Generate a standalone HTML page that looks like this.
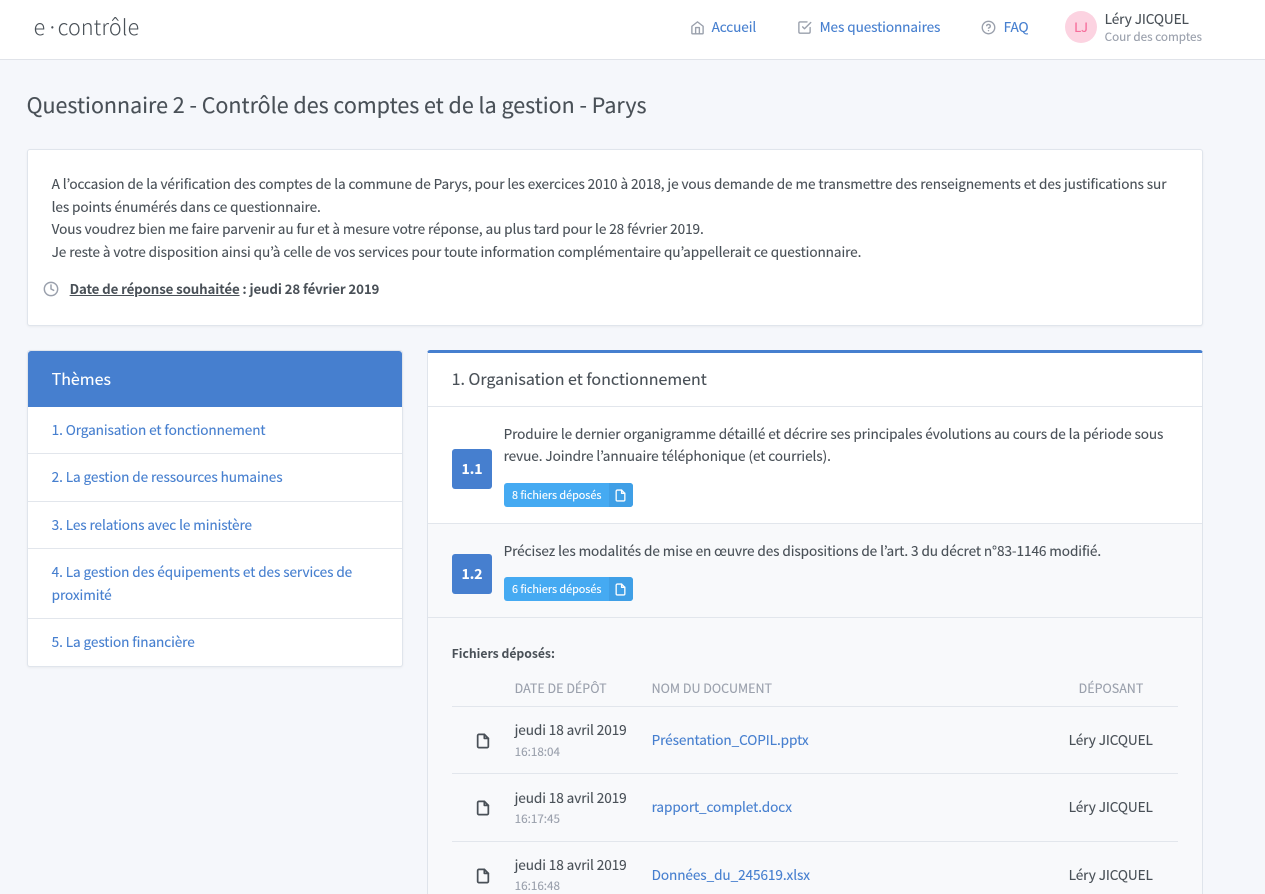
<!DOCTYPE html>
<html lang="fr"><head><meta charset="utf-8"><title>e-contrôle</title>
<style>
html,body{margin:0;padding:0;width:1265px;height:894px;overflow:hidden}
body{position:relative;background:#f5f7fb;color:#495057;font-family:"Noto Sans CJK JP","Liberation Sans",sans-serif;font-size:13.6px;letter-spacing:-.09px;-webkit-text-stroke:.12px}
#w{position:absolute;left:0;top:0;width:1265px;height:894px;overflow:hidden}
.a{position:absolute;white-space:nowrap;line-height:22px;margin-top:-1px;margin-left:-.4px}
.b{position:absolute;box-sizing:border-box}
.l{color:#467fcf}
svg{position:absolute;fill:none;stroke-linecap:round;stroke-linejoin:round}
.card{background:#fff;border:1px solid rgba(0,40,100,.12);border-radius:3px;box-shadow:0 1px 2px rgba(0,0,0,.05)}
.hr{position:absolute;height:1px;background:#e2e6ec}
.num{position:absolute;left:452px;width:40px;height:40px;background:#467fcf;border-radius:3px;color:#fff;font-weight:700;font-size:14px;line-height:40px;text-align:center;letter-spacing:0}
.bad{position:absolute;left:504px;width:129px;height:24px;background:#45aaf2;border-radius:3px;color:#fff;font-size:10.85px;letter-spacing:-.03px;line-height:25px;padding-left:8px;box-sizing:border-box;white-space:nowrap}
.bad i{position:absolute;right:0;top:0;width:24px;height:24px;background:#3f9fe6;border-radius:0 3px 3px 0}
.g{color:#9aa0ac}
.th{font-size:12.5px;letter-spacing:0;margin-top:0}
.t{font-size:11.7px;letter-spacing:0;margin-top:0}
.big{margin-top:0;font-size:16px;letter-spacing:0}
.logo{margin-top:0;font-size:21.5px;font-weight:300;line-height:28px;letter-spacing:.1px;-webkit-text-stroke:0}
</style></head><body><div id="w">
<div class="b" style="left:0;top:0;width:1265px;height:60px;background:#fff;border-bottom:1px solid #e0e3e9"></div>
<div class="a logo" style="left:34px;top:13px">e</div>
<div class="a logo" style="left:47px;top:13px">·</div>
<div class="a logo" style="left:58px;top:13px">contrôle</div>

<svg style="left:690px;top:20px" width="15" height="15" viewBox="0 0 24 24" stroke="#9aa0ac" stroke-width="2.2"><path d="M3 10l9-7 9 7v11a1 1 0 0 1-1 1H4a1 1 0 0 1-1-1z"/><path d="M9 22V12h6v10"/></svg>
<div class="a l" style="left:712px;top:16px">Accueil</div>
<svg style="left:797px;top:20px" width="15" height="15" viewBox="0 0 24 24" stroke="#9aa0ac" stroke-width="2.2"><path d="M9 11l3 3L22 4"/><path d="M21 12v7a2 2 0 0 1-2 2H5a2 2 0 0 1-2-2V5a2 2 0 0 1 2-2h11"/></svg>
<div class="a l" style="left:820px;top:16px">Mes questionnaires</div>
<svg style="left:981px;top:20px" width="15" height="15" viewBox="0 0 24 24" stroke="#9aa0ac" stroke-width="2.2"><circle cx="12" cy="12" r="10"/><path d="M9.1 9a3 3 0 0 1 5.8 1c0 2-3 3-3 3"/><path d="M12 17h.01"/></svg>
<div class="a l" style="left:1004px;top:16px">FAQ</div>
<div class="b" style="left:1065px;top:11px;width:32px;height:32px;border-radius:50%;background:#fcd3e1;color:#f66d9b;text-align:center;line-height:32px;font-size:13px">LJ</div>
<div class="a" style="left:1105px;top:8px">Léry JICQUEL</div>
<div class="a g" style="left:1105px;top:26px;margin-top:0;font-size:11.7px;letter-spacing:0">Cour des comptes</div>

<div class="a" style="left:27px;top:89px;margin-top:0;font-size:21.45px;letter-spacing:0;line-height:32px">Questionnaire 2 - Contrôle des comptes et de la gestion - Parys</div>

<div class="b card" style="left:27px;top:149px;width:1176px;height:177px"></div>
<div class="a" style="left:52px;top:173px">A l’occasion de la vérification des comptes de la commune de Parys, pour les exercices 2010 à 2018, je vous demande de me transmettre des renseignements et des justifications sur</div>
<div class="a" style="left:52px;top:196px">les points énumérés dans ce questionnaire.</div>
<div class="a" style="left:52px;top:218px">Vous voudrez bien me faire parvenir au fur et à mesure votre réponse, au plus tard pour le 28 février 2019.</div>
<div class="a" style="left:52px;top:241px">Je reste à votre disposition ainsi qu’à celle de vos services pour toute information complémentaire qu’appellerait ce questionnaire.</div>
<svg style="left:43px;top:281px" width="16" height="16" viewBox="0 0 24 24" stroke="#9aa0ac" stroke-width="2.2"><circle cx="12" cy="12" r="10"/><path d="M12 6v6l4 2"/></svg>
<div class="a" style="left:70px;top:278px;margin-top:0;font-weight:700;font-size:13.3px;letter-spacing:-.13px;-webkit-text-stroke:0"><u>Date de réponse souhaitée</u> : jeudi 28 février 2019</div>

<div class="b card" style="left:27px;top:350px;width:376px;height:317px"></div>
<div class="b" style="left:28px;top:351px;width:374px;height:56px;background:#467fcf;border-radius:3px 3px 0 0"></div>
<div class="a big" style="left:52px;top:367px;color:#fff">Thèmes</div>
<div class="a l" style="left:52px;top:419px">1. Organisation et fonctionnement</div>
<div class="hr" style="left:28px;top:453px;width:374px"></div>
<div class="a l" style="left:52px;top:466px">2. La gestion de ressources humaines</div>
<div class="hr" style="left:28px;top:501px;width:374px"></div>
<div class="a l" style="left:52px;top:514px">3. Les relations avec le ministère</div>
<div class="hr" style="left:28px;top:548px;width:374px"></div>
<div class="a l" style="left:52px;top:561px">4. La gestion des équipements et des services de</div>
<div class="a l" style="left:52px;top:584px">proximité</div>
<div class="hr" style="left:28px;top:618px;width:374px"></div>
<div class="a l" style="left:52px;top:631px">5. La gestion financière</div>

<div class="b" style="left:427px;top:350px;width:776px;height:560px;background:#fff;border:1px solid rgba(0,40,100,.12);border-top:3px solid #467fcf;border-radius:3px"></div>
<div class="a big" style="left:452px;top:367px">1. Organisation et fonctionnement</div>
<div class="hr" style="left:428px;top:406px;width:774px"></div>
<div class="a" style="left:504px;top:423px">Produire le dernier organigramme détaillé et décrire ses principales évolutions au cours de la période sous</div>
<div class="a" style="left:504px;top:445px">revue. Joindre l’annuaire téléphonique (et courriels).</div>
<div class="num" style="top:449px">1.1</div>
<div class="bad" style="top:483px">8 fichiers déposés<i></i><svg style="left:110px;top:6px" width="13" height="13" viewBox="0 0 24 24" stroke="#fff" stroke-width="2.4"><path d="M14 2H6a2 2 0 0 0-2 2v16a2 2 0 0 0 2 2h12a2 2 0 0 0 2-2V8z"/><path d="M14 2v6h6"/></svg></div>
<div class="b" style="left:428px;top:523px;width:774px;height:390px;background:#f8f9fb;border-top:1px solid #e2e6ec"></div>
<div class="a" style="left:504px;top:540px">Précisez les modalités de mise en œuvre des dispositions de l’art. 3 du décret n°83-1146 modifié.</div>
<div class="num" style="top:554px">1.2</div>
<div class="bad" style="top:577px">6 fichiers déposés<i></i><svg style="left:110px;top:6px" width="13" height="13" viewBox="0 0 24 24" stroke="#fff" stroke-width="2.4"><path d="M14 2H6a2 2 0 0 0-2 2v16a2 2 0 0 0 2 2h12a2 2 0 0 0 2-2V8z"/><path d="M14 2v6h6"/></svg></div>
<div class="hr" style="left:428px;top:617px;width:774px"></div>
<div class="a" style="left:452px;top:642px;margin-top:0;font-size:12.2px;letter-spacing:0;font-weight:700;-webkit-text-stroke:0">Fichiers déposés:</div>
<div class="a g th" style="left:515px;top:677px">DATE DE DÉPÔT</div>
<div class="a g th" style="left:652px;top:677px">NOM DU DOCUMENT</div>
<div class="a g th" style="left:1079px;top:677px">DÉPOSANT</div>
<div class="hr" style="left:452px;top:706px;width:726px"></div>

<svg style="left:475px;top:733px" width="16" height="16" viewBox="0 0 24 24" stroke="#495057" stroke-width="2.6"><path d="M14 2H6a2 2 0 0 0-2 2v16a2 2 0 0 0 2 2h12a2 2 0 0 0 2-2V8z"/><path d="M14 2v6h6"/></svg>
<div class="a" style="left:515px;top:719px">jeudi 18 avril 2019</div>
<div class="a g t" style="left:515px;top:741px">16:18:04</div>
<div class="a l" style="left:652px;top:729px">Présentation_COPIL.pptx</div>
<div class="a" style="left:1069px;top:729px">Léry JICQUEL</div>
<div class="hr" style="left:452px;top:773px;width:726px"></div>

<svg style="left:475px;top:800px" width="16" height="16" viewBox="0 0 24 24" stroke="#495057" stroke-width="2.6"><path d="M14 2H6a2 2 0 0 0-2 2v16a2 2 0 0 0 2 2h12a2 2 0 0 0 2-2V8z"/><path d="M14 2v6h6"/></svg>
<div class="a" style="left:515px;top:787px">jeudi 18 avril 2019</div>
<div class="a g t" style="left:515px;top:808px">16:17:45</div>
<div class="a l" style="left:652px;top:796px">rapport_complet.docx</div>
<div class="a" style="left:1069px;top:796px">Léry JICQUEL</div>
<div class="hr" style="left:452px;top:841px;width:726px"></div>

<svg style="left:475px;top:868px" width="16" height="16" viewBox="0 0 24 24" stroke="#495057" stroke-width="2.6"><path d="M14 2H6a2 2 0 0 0-2 2v16a2 2 0 0 0 2 2h12a2 2 0 0 0 2-2V8z"/><path d="M14 2v6h6"/></svg>
<div class="a" style="left:515px;top:854px">jeudi 18 avril 2019</div>
<div class="a g t" style="left:515px;top:875px">16:16:48</div>
<div class="a l" style="left:652px;top:864px">Données_du_245619.xlsx</div>
<div class="a" style="left:1069px;top:864px">Léry JICQUEL</div>
</div></body></html>
